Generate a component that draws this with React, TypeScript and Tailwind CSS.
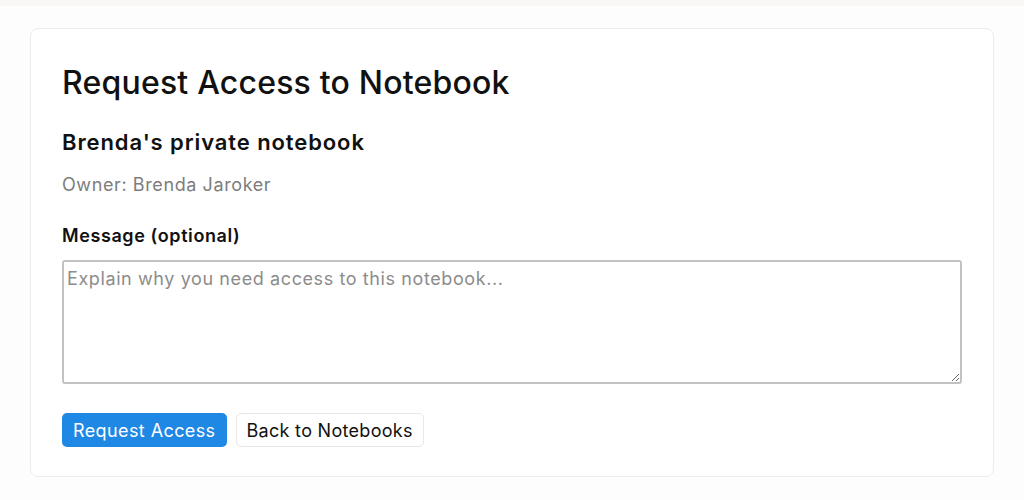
export default function App() {
  return (
    <div className="min-h-[500px] w-full bg-[#fdfdfd] font-['Inter',sans-serif]">
      <div className="h-[6px] bg-[#f8f7f5]" />
      <div className="px-[30px] pt-[22px]">
        <div className="rounded-lg border border-[#ededed] bg-white px-[31px] pt-[30px] pb-[29px]">
          <h1 className="text-[32px] leading-[48px] font-medium text-[#111] tracking-[0.2px]">
            Request Access to Notebook
          </h1>
          <h2 className="mt-[20px] text-[22px] leading-[30px] font-semibold text-[#111] tracking-[0.9px]">
            Brenda&apos;s private notebook
          </h2>
          <p className="mt-[16px] text-[18px] leading-[24px] text-[#7d7d7d] tracking-[0.6px]">
            Owner: Brenda Jaroker
          </p>
          <label className="mt-[27px] block text-[18px] leading-[24px] font-semibold text-[#111] tracking-[0.6px]">
            Message (optional)
          </label>
          <textarea
            className="mt-[12px] block h-[124px] w-full rounded-[3px] border-2 border-[#c2c2c2] px-[3px] py-[4px] text-[18px] leading-[26px] tracking-[0.6px] text-[#111] placeholder:text-[#8c8c8c] outline-none"
            placeholder="Explain why you need access to this notebook..."
          />
          <div className="mt-[29px] flex gap-[9px]">
            <button className="h-[34px] rounded-[5px] bg-[#1f88e5] px-[11px] text-[18px] tracking-[0.4px] text-white">
              Request Access
            </button>
            <button className="h-[34px] rounded-[5px] border border-[#e8e8e8] bg-white px-[10px] text-[18px] tracking-[0.3px] text-[#111]">
              Back to Notebooks
            </button>
          </div>
        </div>
      </div>
    </div>
  );
}
